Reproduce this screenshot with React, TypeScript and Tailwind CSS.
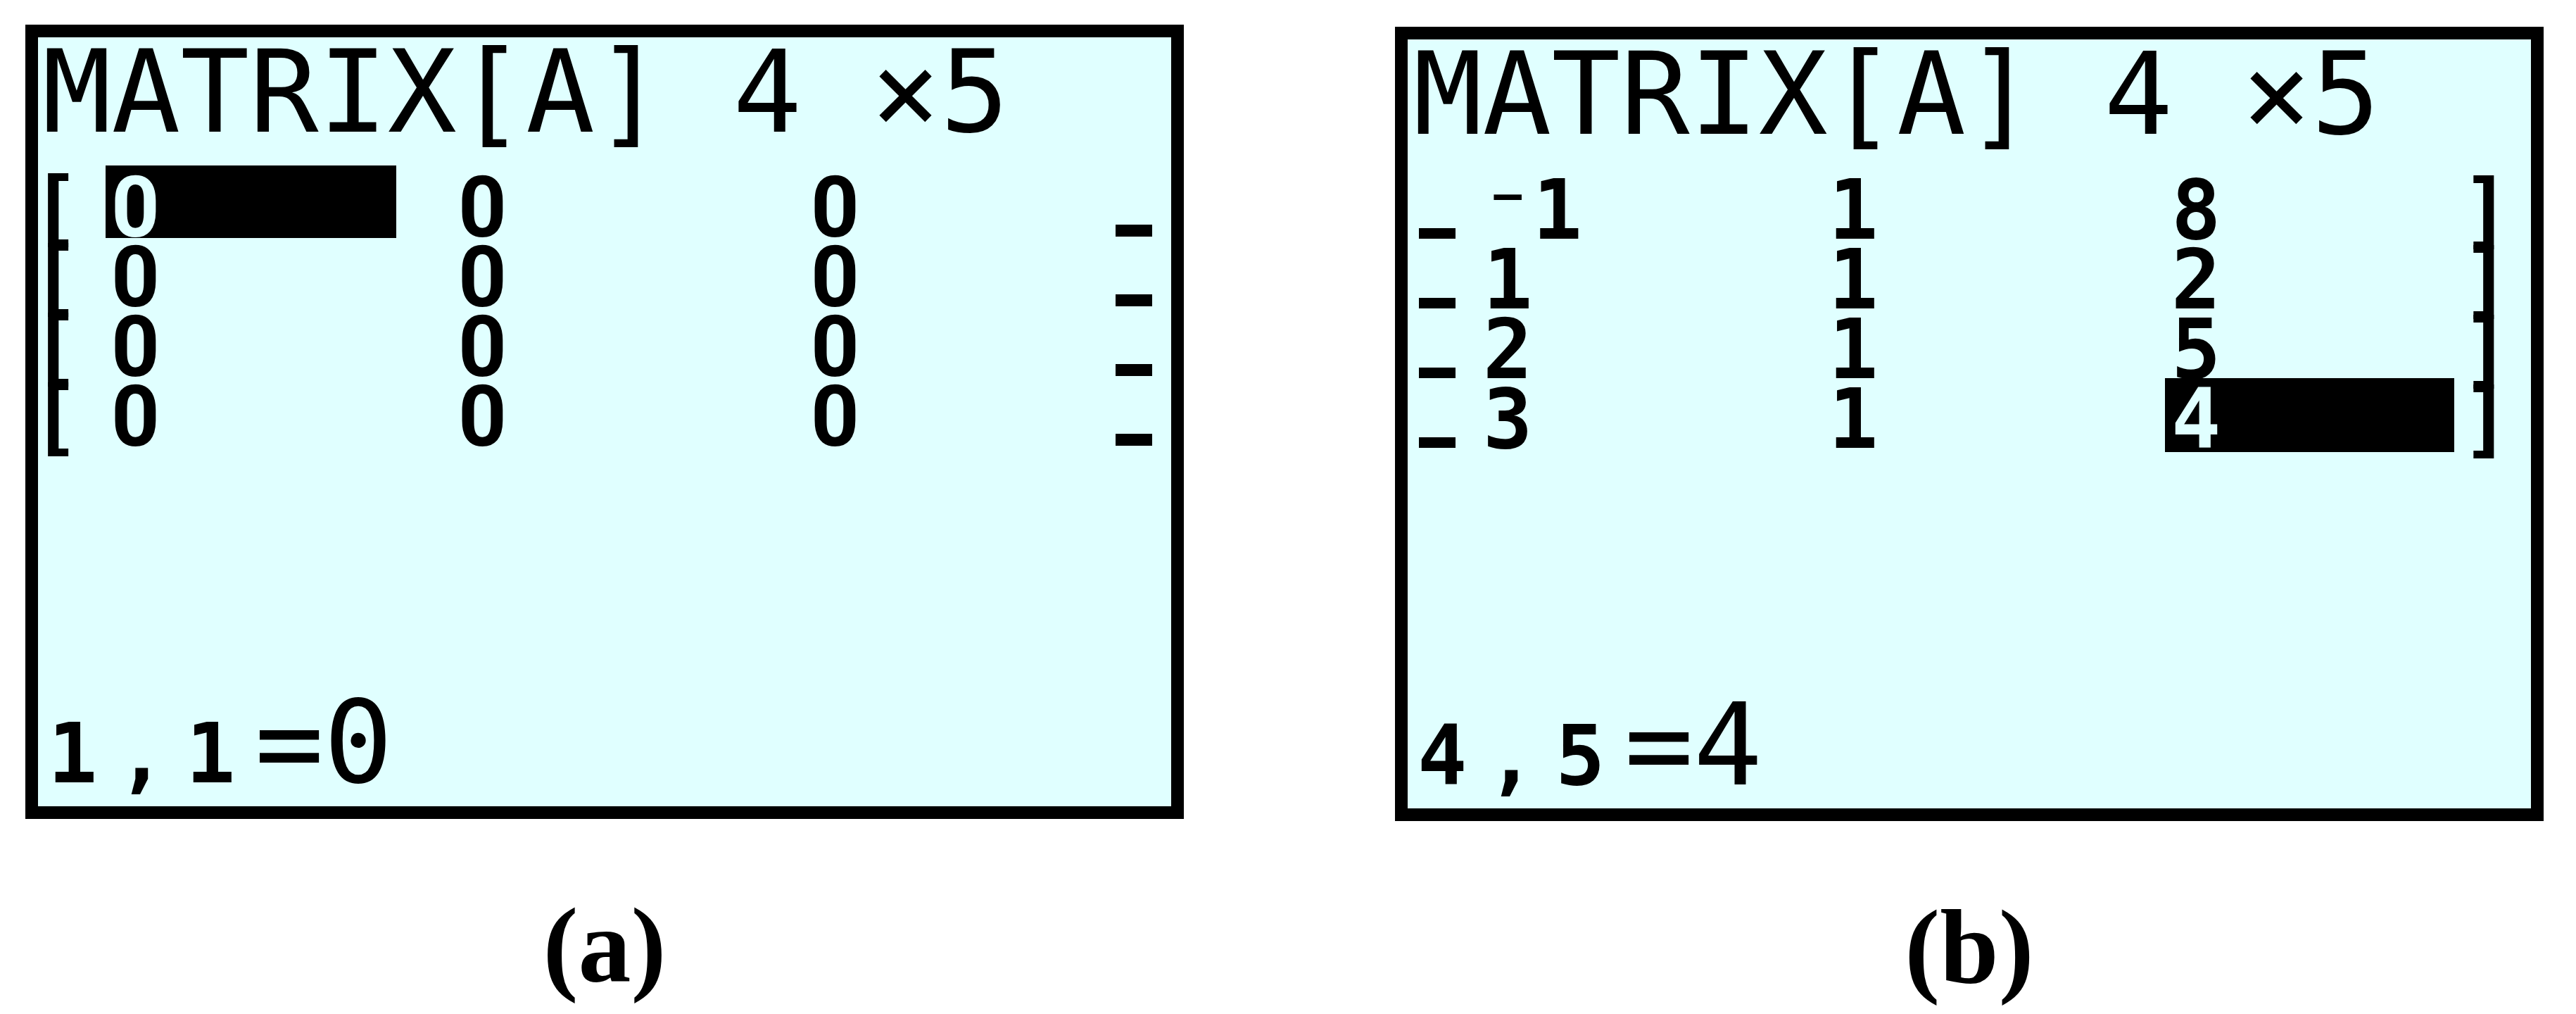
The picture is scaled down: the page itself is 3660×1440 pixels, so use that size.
import React from "react";

// TI-83 style matrix editor screens, side by side with (a) / (b) captions
const BIG = "font-['DejaVu_Sans_Mono',monospace] text-[163px] leading-[120px] font-normal";
const SMALL = "font-['DejaVu_Sans_Mono',monospace] text-[117px] leading-[99px] font-bold";

function Caption({ children }: { children: React.ReactNode }) {
  return (
    <div className="mt-[104px] font-['Liberation_Serif',serif] font-bold text-[150px] leading-[150px] text-black">
      {children}
    </div>
  );
}

// plain (undotted) zero of the small calculator font
function Zero() {
  return <span className="font-['Roboto',sans-serif] text-[120px]">0</span>;
}

function ScreenA() {
  const rows = [0, 1, 2, 3];
  return (
    <div className="w-[1646px] h-[1128px] border-[18px] border-black bg-[#e0ffff] text-black flex flex-col">
      <div className={`${BIG} pt-[18px] pl-[6px] whitespace-pre`}>MATRIX[A] 4 ×5</div>

      <div className={`${SMALL} mt-[55px] flex flex-col`}>
        {rows.map((r) => (
          <div key={r} className="flex items-baseline h-[99px]">
            <span className="shrink-0 -ml-[10px] w-[114px]">[</span>
            <span className="shrink-0 w-[493px]">
              {r === 0 ? (
                <span className="inline-block -ml-[8px] -mt-[11px] pt-[11px] pl-[8px] h-[103px] w-[413px] bg-black text-[#e0ffff]">
                  <Zero />
                </span>
              ) : (
                <Zero />
              )}
            </span>
            <span className="shrink-0 w-[501px]">
              <Zero />
            </span>
            <span className="shrink-0 w-[433px]">
              <Zero />
            </span>
            <span className="shrink-0 w-[52px] h-[17px] bg-black" />
          </div>
        ))}
      </div>

      <div className="mt-[353px] flex items-baseline pl-[14px]">
        <span className={`${SMALL} shrink-0 w-[98px]`}>1</span>
        <span className={`${SMALL} shrink-0 w-[98px]`}>,</span>
        <span className={`${SMALL} shrink-0 w-[98px]`}>1</span>
        <span className={`${BIG} shrink-0 w-[98px]`}>=</span>
        <span className={`${BIG} shrink-0`}>0</span>
      </div>
    </div>
  );
}

function ScreenB() {
  const col1 = ["⁻1", "1", "2", "3"];
  const col3 = ["8", "2", "5", "4"];
  return (
    <div className="w-[1632px] h-[1128px] border-[18px] border-black bg-[#e0ffff] text-black flex flex-col">
      <div className={`${BIG} pt-[18px] pl-[8px] whitespace-pre`}>MATRIX[A] 4 ×5</div>

      <div className={`${SMALL} mt-[55px] flex flex-col`}>
        {col1.map((v, r) => (
          <div key={r} className="flex items-baseline h-[99px]">
            <span className="shrink-0 ml-[16px] w-[52px] h-[15px] bg-black" />
            <span className="shrink-0 ml-[39px] w-[491px] whitespace-pre">{v}</span>
            <span className="shrink-0 w-[487px]">1</span>
            <span className="shrink-0 w-[412px]">
              {r === 3 ? (
                <span className="inline-block -ml-[9px] -mt-[9px] pt-[9px] pl-[9px] h-[105px] w-[411px] bg-black text-[#e0ffff]">
                  {col3[r]}
                </span>
              ) : (
                col3[r]
              )}
            </span>
            <span className="shrink-0">]</span>
          </div>
        ))}
      </div>

      <div className="mt-[353px] flex items-baseline pl-[14px]">
        <span className={`${SMALL} shrink-0 w-[98px]`}>4</span>
        <span className={`${SMALL} shrink-0 w-[98px]`}>,</span>
        <span className={`${SMALL} shrink-0 w-[98px]`}>5</span>
        <span className={`${BIG} shrink-0 w-[98px]`}>=</span>
        <span className={`${BIG} shrink-0`}>4</span>
      </div>
    </div>
  );
}

export default function App() {
  return (
    <div className="w-[3660px] h-[1440px] bg-white flex items-start pl-[36px] pt-[35px] gap-[300px]">
      <div className="flex flex-col items-center">
        <ScreenA />
        <Caption>(a)</Caption>
      </div>
      <div className="flex flex-col items-center mt-[3px]">
        <ScreenB />
        <Caption>(b)</Caption>
      </div>
    </div>
  );
}
